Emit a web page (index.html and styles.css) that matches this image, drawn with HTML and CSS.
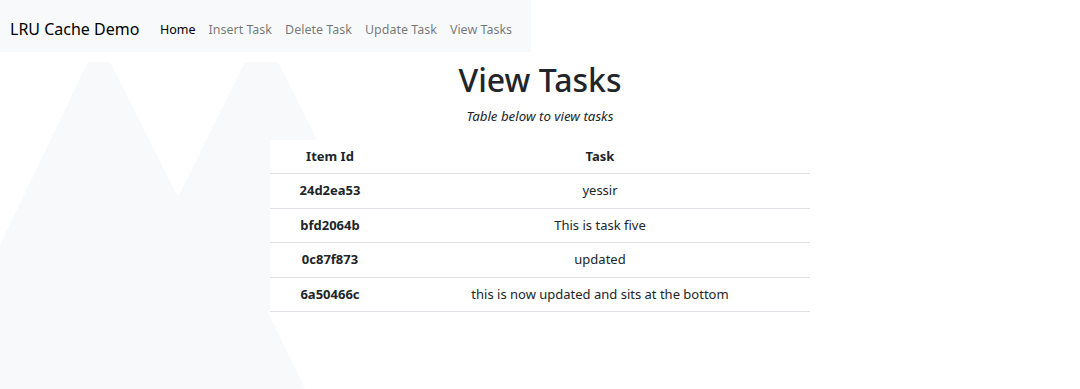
FILE: index.html
```html
<!DOCTYPE html>
<html lang="en">
<head>
    <meta charset="UTF-8">
    <meta name="viewport" content="width=device-width, initial-scale=1.0">
    <title>LRU Cache Demo</title>
    <link rel="stylesheet" href="styles.css">
</head>
<body>

<svg class="backdrop" width="420" height="389" viewBox="0 0 420 389">
    <polygon points="0,245 88,62 110,62 178,197 245,62 278,62 400,306 268,312 305,389 0,389" fill="#f8f9fa"/>
</svg>

<nav class="navbar">
    <span class="brand">LRU Cache Demo</span>
    <a class="nav-link active" href="#">Home</a>
    <a class="nav-link" href="#">Insert Task</a>
    <a class="nav-link" href="#">Delete Task</a>
    <a class="nav-link" href="#">Update Task</a>
    <a class="nav-link" href="#">View Tasks</a>
</nav>

<div class="container">
    <h1>View Tasks</h1>
    <p class="lead">Table below to view tasks</p>

    <table class="tasks">
        <thead>
            <tr>
                <th class="col-id">Item Id</th>
                <th>Task</th>
            </tr>
        </thead>
        <tbody>
            <tr><th>24d2ea53</th><td>yessir</td></tr>
            <tr><th>bfd2064b</th><td>This is task five</td></tr>
            <tr><th>0c87f873</th><td>updated</td></tr>
            <tr><th>6a50466c</th><td>this is now updated and sits at the bottom</td></tr>
        </tbody>
    </table>
</div>

</body>
</html>
```

FILE: styles.css
```css
body {
    margin: 0;
    font-family: "Noto Sans", sans-serif;
    color: #212529;
    background: #fff;
}
.backdrop {
    position: absolute;
    left: 0;
    top: 0;
    z-index: -1;
}
.navbar {
    display: flex;
    align-items: center;
    width: 531px;
    height: 52px;
    padding: 6px 10px 0;
    box-sizing: border-box;
    background-color: #f8f9fa;
    white-space: nowrap;
}
.brand {
    font-size: 16px;
    color: #000;
    margin-right: 14px;
}
.nav-link {
    font-size: 12.5px;
    color: rgba(0, 0, 0, 0.55);
    text-decoration: none;
    padding: 0 6.5px;
}
.nav-link.active {
    color: #000;
}
.container {
    text-align: center;
}
h1 {
    font-size: 32px;
    font-weight: 500;
    line-height: 1.2;
    margin: 9px 0 7px;
}
.lead {
    font-style: italic;
    font-size: 13.3px;
    line-height: 20px;
    margin: 0 0 13.6px;
}
.tasks {
    width: 540px;
    margin: 0 auto;
    border-collapse: collapse;
    font-size: 13px;
    line-height: 1.5;
}
.tasks th, .tasks td {
    background: #fff;
    padding: 7px 8px;
    border-bottom: 1px solid #dee2e6;
}
.tasks th {
    font-weight: 700;
}
.col-id {
    box-sizing: border-box;
    width: 120px;
}
```
